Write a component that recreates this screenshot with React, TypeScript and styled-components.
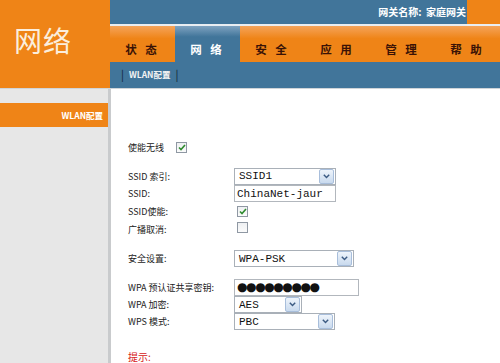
import styled, { createGlobalStyle } from "styled-components";

const GlobalStyle = createGlobalStyle`
  html, body {
    margin: 0;
    padding: 0;
    background: #fff;
  }
  body {
    font-family: "Noto Sans CJK SC", "DejaVu Sans", sans-serif;
  }
`;

const ORANGE = "#ef8417";
const BLUE = "#41759a";

const tabs = ["状 态", "网 络", "安 全", "应 用", "管 理", "帮 助"];

const CheckMark = () => (
  <svg width="8" height="7" viewBox="0 0 8 7">
    <path d="M1 3.5 L3 5.5 L7 1" stroke="#2e8b2e" strokeWidth="1.6" fill="none" />
  </svg>
);

const Chevron = () => (
  <svg width="7" height="5" viewBox="0 0 7 5">
    <path d="M0.8 0.8 L3.5 3.6 L6.2 0.8" stroke="#3b5a82" strokeWidth="1.4" fill="none" />
  </svg>
);

interface SelectProps {
  value: string;
  width: number;
}

const FakeSelect = ({ value, width }: SelectProps) => (
  <SelectBox style={{ width }}>
    <SelectValue>{value}</SelectValue>
    <DropButton>
      <Chevron />
    </DropButton>
  </SelectBox>
);

const CheckBox = ({ checked }: { checked?: boolean }) => (
  <Box>{checked && <CheckMark />}</Box>
);

const App = () => {
  return (
    <Page>
      <GlobalStyle />
      <Header>
        <Logo>网络</Logo>
        <HeaderRight>
          <TopBar>
            <GatewayName>网关名称:&nbsp;&nbsp;家庭网关</GatewayName>
            <Corner />
          </TopBar>
          <Nav>
            {tabs.map((t, i) => (
              <Tab key={t} $active={i === 1}>
                {t}
              </Tab>
            ))}
          </Nav>
          <SubNav>
            <Sep>|</Sep>
            <SubLink>WLAN配置</SubLink>
            <Sep>|</Sep>
          </SubNav>
        </HeaderRight>
      </Header>
      <Strip />
      <Body>
        <Sidebar>
          <MenuItem>WLAN配置</MenuItem>
        </Sidebar>
        <Content>
          <EnableRow>
            <span>使能无线</span>
            <CheckBox checked />
          </EnableRow>

          <Group $top={14}>
            <Row $h={18}>
              <Label>SSID 索引:</Label>
              <FakeSelect value="SSID1" width={102} />
            </Row>
            <Row $h={17}>
              <Label>SSID:</Label>
              <TextBox style={{ width: 102 }}>ChinaNet-jaur</TextBox>
            </Row>
            <Row $h={18}>
              <Label>SSID使能:</Label>
              <CheckCell>
                <CheckBox checked />
              </CheckCell>
            </Row>
            <Row $h={18}>
              <Label>广播取消:</Label>
              <CheckCell>
                <CheckBox />
              </CheckCell>
            </Row>
          </Group>

          <Group $top={11}>
            <Row $h={19}>
              <Label>安全设置:</Label>
              <FakeSelect value="WPA-PSK" width={120} />
            </Row>
          </Group>

          <Group $top={10}>
            <Row $h={18}>
              <Label>WPA 预认证共享密钥:</Label>
              <TextBox style={{ width: 125 }}>
                <Dots>●●●●●●●●●</Dots>
              </TextBox>
            </Row>
            <Row $h={17}>
              <Label>WPA 加密:</Label>
              <FakeSelect value="AES" width={68} />
            </Row>
            <Row $h={17}>
              <Label>WPS 模式:</Label>
              <FakeSelect value="PBC" width={101} />
            </Row>
          </Group>

          <Hint>提示:</Hint>
        </Content>
      </Body>
    </Page>
  );
};

export default App;

const Page = styled.div`
  width: 500px;
  height: 363px;
  overflow: hidden;
  background: #fff;
  display: flex;
  flex-direction: column;
`;

const Header = styled.div`
  display: flex;
  height: 88px;
`;

const Logo = styled.div`
  width: 110px;
  background: ${ORANGE};
  color: #fbeedd;
  font-size: 28px;
  line-height: 1;
  padding: 26px 0 0 14px;
  box-sizing: border-box;
  letter-spacing: 1px;
`;

const HeaderRight = styled.div`
  flex: 1;
  display: flex;
  flex-direction: column;
`;

const TopBar = styled.div`
  height: 24px;
  background: ${BLUE};
  display: flex;
  justify-content: flex-end;
  border-bottom: 2px solid #e9eef2;
`;

const GatewayName = styled.div`
  color: #fff;
  font-size: 10px;
  font-weight: bold;
  padding: 4px 1px 0 0;
`;

const Corner = styled.div`
  width: 33px;
  background: ${ORANGE};
`;

const Nav = styled.div`
  height: 36px;
  display: flex;
  background: linear-gradient(#f5a45a 0%, ${ORANGE} 35%, ${ORANGE} 100%);
`;

const Tab = styled.div<{ $active?: boolean }>`
  width: 65px;
  display: flex;
  align-items: center;
  justify-content: center;
  padding-top: 9px;
  box-sizing: border-box;
  font-size: 11.5px;
  font-weight: bold;
  letter-spacing: 3px;
  color: ${(p) => (p.$active ? "#fff" : "#3a1206")};
  background: ${(p) =>
    p.$active ? `linear-gradient(#7fa3c0 0%, ${BLUE} 30%, ${BLUE} 100%)` : "transparent"};
`;

const SubNav = styled.div`
  height: 26px;
  background: ${BLUE};
  display: flex;
  align-items: flex-start;
  padding: 5px 0 0 11px;
  box-sizing: border-box;
  gap: 5px;
  color: #fff;
`;

const Sep = styled.span`
  font-size: 11px;
  color: #0c2236;
  line-height: 14px;
`;

const SubLink = styled.span`
  font-size: 8.5px;
  line-height: 14px;
  color: #f2f2f2;
  font-weight: bold;
`;

const Strip = styled.div`
  height: 6px;
  background: #dedede;
  border-bottom: 1px solid #cfd4d8;
`;

const Body = styled.div`
  flex: 1;
  display: flex;
`;

const Sidebar = styled.div`
  width: 108px;
  background: #e7e7e7;
  border-right: 3px solid #c9cbcd;
  padding-top: 14px;
`;

const MenuItem = styled.div`
  height: 24px;
  background: ${ORANGE};
  color: #fff;
  font-size: 8.5px;
  font-weight: bold;
  text-align: right;
  padding-right: 5px;
  line-height: 24px;
`;

const Content = styled.div`
  flex: 1;
  padding: 52px 0 0 17px;
  font-size: 9px;
  color: #222;
`;

const EnableRow = styled.div`
  display: flex;
  align-items: center;
  gap: 12px;
  height: 12px;
`;

const Group = styled.div<{ $top: number }>`
  margin-top: ${(p) => p.$top}px;
  display: flex;
  flex-direction: column;
`;

const Row = styled.div<{ $h: number }>`
  height: ${(p) => p.$h}px;
  display: flex;
  align-items: center;
`;

const Label = styled.div`
  width: 106px;
  font-size: 9px;
  color: #222;
  white-space: nowrap;
`;

const CheckCell = styled.div`
  padding-left: 3px;
`;

const Box = styled.span`
  width: 9px;
  height: 9px;
  border: 1px solid #8f98a3;
  background: linear-gradient(#eef0f2, #fbfbfb);
  display: inline-flex;
  align-items: center;
  justify-content: center;
`;

const SelectBox = styled.div`
  height: 17px;
  box-sizing: border-box;
  border: 1px solid #a9b0b8;
  display: flex;
  align-items: center;
  justify-content: space-between;
  background: #fff;
  padding: 0 1px 0 4px;
`;

const SelectValue = styled.span`
  font-family: "Liberation Mono", monospace;
  font-size: 11px;
  color: #111;
`;

const DropButton = styled.span`
  width: 13px;
  height: 13px;
  border: 1px solid #a8bedb;
  border-radius: 2px;
  background: linear-gradient(#eef4fb, #c9daee);
  display: inline-flex;
  align-items: center;
  justify-content: center;
`;

const TextBox = styled.div`
  height: 17px;
  box-sizing: border-box;
  border: 1px solid #b2b7bd;
  font-family: "Liberation Mono", monospace;
  font-size: 11px;
  color: #111;
  display: flex;
  align-items: center;
  padding-left: 2px;
`;

const Dots = styled.span`
  font-family: "DejaVu Sans", sans-serif;
  font-size: 12px;
  letter-spacing: -1.4px;
`;

const Hint = styled.div`
  margin-top: 19px;
  color: #d62020;
  font-size: 10px;
`;
